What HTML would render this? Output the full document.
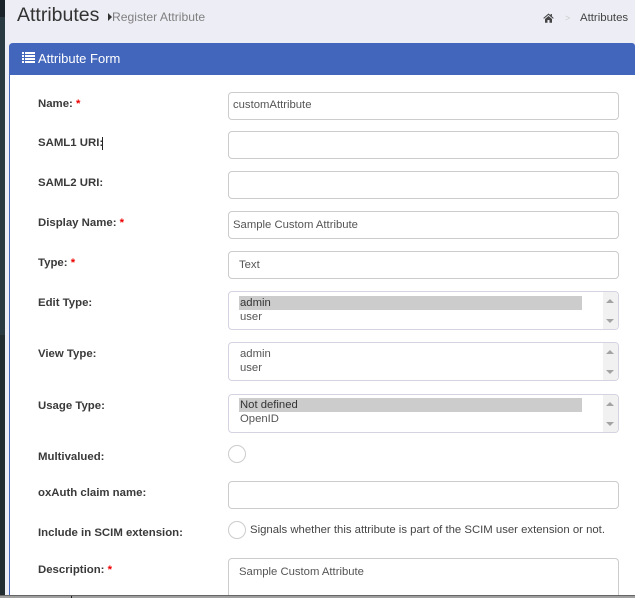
<!DOCTYPE html>
<html><head><meta charset="utf-8"><style>
html,body{margin:0;padding:0;width:635px;height:598px;overflow:hidden}
#root{position:absolute;left:0;top:0;width:635px;height:598px;overflow:hidden;background:#ecedf5;font-family:"Liberation Sans",sans-serif;color:#333}
div,span{position:absolute;box-sizing:border-box;white-space:nowrap}
.lab{left:38px;font-size:11.4px;font-weight:bold;color:#3a3a3a;line-height:14px}
.lab i{font-style:normal;color:#e00;margin-left:0}
.inp{left:228px;width:391px;height:28px;background:#fff;border:1px solid #ccc;border-radius:4px;font-size:11.3px;color:#555;line-height:26px;padding-left:4px}
.sel{left:228px;width:391px;height:39px;background:#fff;border:1px solid #d5d3e0;border-radius:4px;font-size:11.3px;color:#555}
.opt{left:10px;width:343px;height:14px;line-height:14px;padding-left:1px}
.on{background:#ccc;color:#333}
.sb{right:0;top:0;bottom:0;width:15px;background:#f1f1f1;border-radius:0 3px 3px 0}
.up{left:3px;top:7px;width:0;height:0;border-left:4px solid transparent;border-right:4px solid transparent;border-bottom:4px solid #a3a3a3}
.dn{left:3px;bottom:6px;width:0;height:0;border-left:4px solid transparent;border-right:4px solid transparent;border-top:4px solid #a3a3a3}
.cir{left:228px;width:18px;height:18px;border:1px solid #ccc;border-radius:50%;background:#fff}
</style></head><body><div id="root">
<div style="left:0;top:0;width:5px;height:598px;background:#222d32"></div>
<div style="left:0;top:0;width:5px;height:17px;background:#1a2329"></div>
<div style="left:0;top:17px;width:5px;height:318px;background:#2a3a42"></div>

<div style="left:17px;top:2px;font-size:19.5px;line-height:26px;color:#333">Attributes</div>
<div style="left:108px;top:13px;width:0;height:0;border-top:4px solid transparent;border-bottom:4px solid transparent;border-left:4px solid #333"></div>
<div style="left:112px;top:9px;font-size:12.15px;line-height:16px;color:#808080">Register Attribute</div>
<svg style="position:absolute;left:543px;top:13px" width="11" height="10" viewBox="0 0 11 10"><path d="M5.5 0.5 L0.3 5 L1 5.7 L5.5 1.9 L10 5.7 L10.7 5 L8.9 3.4 V1 H7.6 V2.3 Z M2 6 V9.7 H4.5 V7 H6.5 V9.7 H9 V6 L5.5 3 Z" fill="#444"/></svg>
<div style="left:565px;top:12px;font-size:9px;line-height:12px;color:#ccc">&gt;</div>
<div style="left:580px;top:11px;font-size:11.4px;line-height:14px;color:#444">Attributes</div>

<div style="left:9px;top:43px;width:626px;height:555px;background:#fff;border-left:1px solid #4266bb;border-top-left-radius:4px;border-top-right-radius:4px"></div>
<div style="left:9px;top:43px;width:626px;height:32px;background:#4266bb;border-top-left-radius:4px;border-top-right-radius:3px"></div>
<svg style="position:absolute;left:22px;top:52px" width="13" height="11" viewBox="0 0 13 11" fill="#fff"><path d="M0 0h2v2H0zM3 0h10v2H3zM0 3h2v2H0zM3 3h10v2H3zM0 6h2v2H0zM3 6h10v2H3zM0 9h2v2H0zM3 9h10v2H3z"/></svg>
<div style="left:38px;top:51px;font-size:13px;line-height:16px;color:#fff">Attribute Form</div>

<div class="lab" style="top:97px">Name: <i>*</i></div>
<div class="inp" style="top:92px;line-height:24px">customAttribute</div>

<div class="lab" style="top:136px">SAML1 URI:</div>
<div style="left:102px;top:137px;width:1px;height:13px;background:#222"></div>
<div class="inp" style="top:131px"></div>

<div class="lab" style="top:176px">SAML2 URI:</div>
<div class="inp" style="top:171px"></div>

<div class="lab" style="top:216px">Display Name: <i>*</i></div>
<div class="inp" style="top:211px">Sample Custom Attribute</div>

<div class="lab" style="top:256px">Type: <i>*</i></div>
<div class="inp" style="top:251px;padding-left:10px">Text</div>

<div class="lab" style="top:296px">Edit Type:</div>
<div class="sel" style="top:291px"><div class="opt on" style="top:4px">admin</div><div class="opt" style="top:18px">user</div><div class="sb"><div class="up"></div><div class="dn"></div></div></div>

<div class="lab" style="top:347px">View Type:</div>
<div class="sel" style="top:342px"><div class="opt" style="top:4px">admin</div><div class="opt" style="top:18px">user</div><div class="sb"><div class="up"></div><div class="dn"></div></div></div>

<div class="lab" style="top:399px">Usage Type:</div>
<div class="sel" style="top:394px"><div class="opt on" style="top:3px">Not defined</div><div class="opt" style="top:17px">OpenID</div><div class="sb"><div class="up"></div><div class="dn"></div></div></div>

<div class="lab" style="top:450px">Multivalued:</div>
<div class="cir" style="top:445px"></div>

<div class="lab" style="top:486px">oxAuth claim name:</div>
<div class="inp" style="top:481px"></div>

<div class="lab" style="top:526px">Include in SCIM extension:</div>
<div class="cir" style="top:521px"></div>
<div style="left:250px;top:523px;font-size:11.35px;line-height:14px;color:#444">Signals whether this attribute is part of the SCIM user extension or not.</div>

<div class="lab" style="top:563px">Description: <i>*</i></div>
<div class="inp" style="top:558px;height:50px;padding-left:10px;line-height:26px">Sample Custom Attribute</div>

<div style="left:0;top:595px;width:635px;height:1px;background:#666"></div>
<div style="left:0;top:596px;width:635px;height:2px;background:#a0a0a0"></div>
<div style="left:71px;top:596px;width:1px;height:2px;background:#222"></div>
</div></body></html>
